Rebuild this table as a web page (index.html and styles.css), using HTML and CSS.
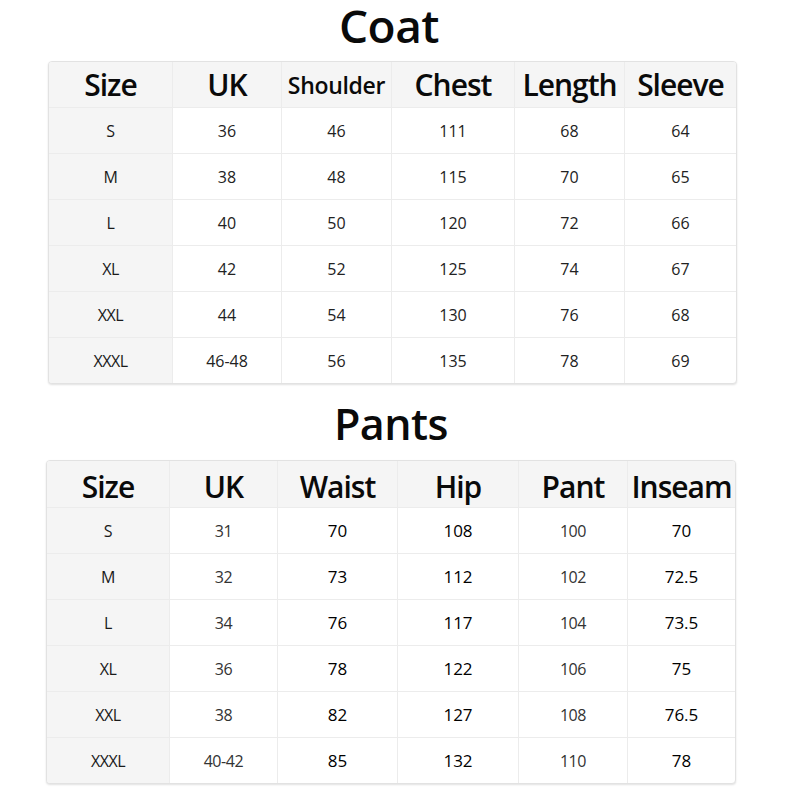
FILE: index.html
```html
<!DOCTYPE html>
<html>
<head>
<meta charset="utf-8">
<link rel="stylesheet" href="styles.css">
</head>
<body>
<div class="page">
  <h1 class="title coat-title">Coat</h1>
  <table class="chart coat">
    <colgroup>
      <col style="width:124px"><col style="width:109px"><col style="width:110px"><col style="width:123px"><col style="width:110px"><col style="width:111px">
    </colgroup>
    <thead>
      <tr><th>Size</th><th>UK</th><th class="small">Shoulder</th><th>Chest</th><th>Length</th><th>Sleeve</th></tr>
    </thead>
    <tbody>
      <tr><th>S</th><td>36</td><td>46</td><td>111</td><td>68</td><td>64</td></tr>
      <tr><th>M</th><td>38</td><td>48</td><td>115</td><td>70</td><td>65</td></tr>
      <tr><th>L</th><td>40</td><td>50</td><td>120</td><td>72</td><td>66</td></tr>
      <tr><th>XL</th><td>42</td><td>52</td><td>125</td><td>74</td><td>67</td></tr>
      <tr><th>XXL</th><td>44</td><td>54</td><td>130</td><td>76</td><td>68</td></tr>
      <tr><th>XXXL</th><td>46-48</td><td>56</td><td>135</td><td>78</td><td>69</td></tr>
    </tbody>
  </table>
  <h1 class="title pants-title">Pants</h1>
  <table class="chart pants">
    <colgroup>
      <col style="width:123px"><col style="width:108px"><col style="width:120px"><col style="width:121px"><col style="width:109px"><col style="width:107px">
    </colgroup>
    <thead>
      <tr><th>Size</th><th>UK</th><th>Waist</th><th>Hip</th><th>Pant</th><th>Inseam</th></tr>
    </thead>
    <tbody>
      <tr><th>S</th><td class="thin">31</td><td class="bold">70</td><td class="bold">108</td><td class="thin">100</td><td class="bold">70</td></tr>
      <tr><th>M</th><td class="thin">32</td><td class="bold">73</td><td class="bold">112</td><td class="thin">102</td><td class="bold">72.5</td></tr>
      <tr><th>L</th><td class="thin">34</td><td class="bold">76</td><td class="bold">117</td><td class="thin">104</td><td class="bold">73.5</td></tr>
      <tr><th>XL</th><td class="thin">36</td><td class="bold">78</td><td class="bold">122</td><td class="thin">106</td><td class="bold">75</td></tr>
      <tr><th>XXL</th><td class="thin">38</td><td class="bold">82</td><td class="bold">127</td><td class="thin">108</td><td class="bold">76.5</td></tr>
      <tr><th>XXXL</th><td class="thin">40-42</td><td class="bold">85</td><td class="bold">132</td><td class="thin">110</td><td class="bold">78</td></tr>
    </tbody>
  </table>
</div>
</body>
</html>
```

FILE: styles.css
```css
html, body {
  margin: 0;
  padding: 0;
  background: #ffffff;
}

.page {
  width: 800px;
  height: 800px;
  font-family: "Open Sans", "Noto Sans", sans-serif;
  color: #111;
}

.title {
  margin: 0;
  text-align: center;
  font-weight: 600;
  color: #0a0a0a;
}

.coat-title {
  height: 61px;
  font-size: 46px;
  line-height: 50px;
  letter-spacing: -0.5px;
  transform: translateX(-11px);
}

.pants-title {
  height: 76px;
  font-size: 43px;
  line-height: 80px;
  letter-spacing: -0.5px;
  transform: translateX(-9px);
}

.chart {
  border-collapse: separate;
  border-spacing: 0;
  table-layout: fixed;
  border: 1px solid #e2e2e2;
  border-radius: 4px;
  box-shadow: 0 1px 2px rgba(0, 0, 0, 0.12);
  overflow: hidden;
  background: #fff;
}

.coat {
  margin-left: 48px;
  width: 687px;
}

.pants {
  margin-left: 46px;
  width: 688px;
}

.chart th,
.chart td {
  height: 45px;
  padding: 0;
  text-align: center;
  vertical-align: middle;
  border-right: 1px solid #ececec;
  border-bottom: 1px solid #ececec;
  white-space: nowrap;
}

.chart tr > :last-child {
  border-right: none;
}

.chart tbody tr:last-child > * {
  border-bottom: none;
}

.chart thead th {
  background: #f5f5f5;
  font-size: 30px;
  font-weight: 600;
  color: #0a0a0a;
  letter-spacing: -1px;
}

.chart thead th.small {
  font-size: 23px;
  letter-spacing: -0.3px;
}

.pants thead th {
  padding-top: 5px;
  height: 40px;
}

.chart tbody th {
  background: #f5f5f5;
  font-size: 16px;
  font-weight: 400;
  color: #1a1a1a;
  letter-spacing: -0.5px;
}

.chart tbody td {
  font-size: 16px;
  font-weight: 400;
  color: #222;
}

.pants tbody td.thin {
  color: #333;
  font-size: 16px;
  letter-spacing: -0.4px;
}

.pants tbody td.bold {
  color: #000;
  font-size: 17px;
  font-weight: 500;
}
```
